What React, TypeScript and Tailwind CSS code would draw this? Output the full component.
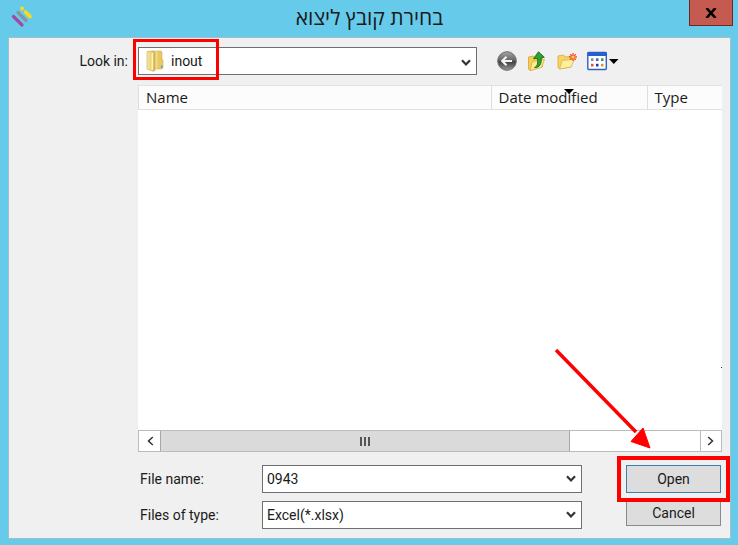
import React, { useState } from "react";

const columns = [
  { name: "Name", width: "w-auto" },
  { name: "Date modified", width: "w-[156px]", sorted: true },
  { name: "Type", width: "w-[75px]" },
];

const uiFont = "font-['Roboto','Liberation_Sans',sans-serif]";
const listFont = "font-['Open_Sans','Noto_Sans',sans-serif]";

const Chevron = ({ className = "", weight = 2.2 }: { className?: string; weight?: number }) => (
  <svg viewBox="0 0 10 8" className={`pointer-events-none h-2 w-2.5 ${className}`}>
    <path d="M1 1.2l4 4.300 4-4.300" fill="none" stroke="#333" strokeWidth={weight} />
  </svg>
);

const Logo = () => (
  <svg viewBox="0 0 24 24" className="size-6" strokeLinecap="round" strokeWidth="3.2">
    <path d="M3.500 12.500l8.500 8.500" stroke="#a349a4" />
    <path d="M8 8.500l8 8" stroke="#8296a8" />
    <path d="M15.500 8l4.500 4.500" stroke="#ffd91a" strokeWidth="3.800" />
    <circle cx="12" cy="4.500" r="2" fill="#ffd91a" />
  </svg>
);

const FolderIcon = () => (
  <svg viewBox="0 0 18 22" className="pointer-events-none absolute top-[3px] left-2 h-[22px] w-[18px]">
    <defs>
      <linearGradient id="flap" x1="0" x2="1">
        <stop offset="0" stopColor="#f9eaa8" />
        <stop offset="1" stopColor="#d9b74c" />
      </linearGradient>
    </defs>
    <path d="M6 1h9l1 1v7l1 1v8l-1 1H7z" fill="#e6c864" stroke="#d3b350" strokeWidth=".6" />
    <path d="M9 1.500h2.500v17H9z" fill="#f1db8a" />
    <path d="M1 1.500L6.500 1l2.500 1.500v18l-2 .8L1 19z" fill="url(#flap)" stroke="#cdab48" strokeWidth=".6" />
    <path d="M5.500 3.500l1.500-1v17l-1.500 1z" fill="#fff3c4" />
    <path d="M15 15.500h1.500V18H15z" fill="#4f9fd8" />
  </svg>
);

const BackIcon = () => (
  <svg viewBox="0 0 20 20" className="size-5">
    <defs>
      <linearGradient id="disc" x1="0" x2="0" y1="0" y2="1">
        <stop offset="0" stopColor="#a5a5a5" />
        <stop offset=".45" stopColor="#686868" />
        <stop offset=".55" stopColor="#404040" />
        <stop offset="1" stopColor="#9a9a9a" />
      </linearGradient>
    </defs>
    <circle cx="10" cy="10" r="9.300" fill="url(#disc)" stroke="#6b6b6b" />
    <path d="M15 10H5.500M9.500 5.700L5.200 10l4.300 4.300" fill="none" stroke="#f4f4f4" strokeWidth="2.200" />
  </svg>
);

const UpIcon = () => (
  <svg viewBox="0 0 20 20" className="size-5">
    <path d="M1.500 6l5-1L8 6.500l7.500-1v10L3 19.500 1.500 18z" fill="#f5cf55" stroke="#d5a52c" strokeWidth=".8" />
    <path d="M5.500 10.500l12-2-3 8L3 19.500z" fill="#ffe995" stroke="#d9ac38" strokeWidth=".8" />
    <path
      d="M7.500 16.500c3-1 3.500-4.500 3-9L6.500 7.700 11.500.8l5.800 5.400-3.300.7c1 5.600-1.500 10.100-6.500 9.600z"
      fill="#30a32e"
      stroke="#11731a"
      strokeWidth=".9"
    />
  </svg>
);

const NewFolderIcon = () => (
  <svg viewBox="0 0 20 20" className="size-5">
    <path d="M1 5l5.500-1L8 6l6-.8V16L2.500 18 1 16.500z" fill="#f7d565" stroke="#d8aa35" strokeWidth=".8" />
    <path d="M5 9.500L17.500 8 14 16 2.500 18z" fill="#ffeda2" stroke="#dcb144" strokeWidth=".8" />
    <path d="M16 2v8M12 6h8M13.200 3.200l5.600 5.600M18.800 3.200l-5.600 5.600" stroke="#f2552c" strokeWidth="1.400" />
    <circle cx="16" cy="6" r="1.600" fill="#ffd45e" />
  </svg>
);

const ViewIcon = () => (
  <svg viewBox="0 0 32 20" className="h-5 w-8">
    <rect x=".8" y="1.500" width="18.500" height="17" rx="1" fill="#fff" stroke="#2c62c4" strokeWidth="1.400" />
    <path d="M.5 1h19v4H.5z" fill="#2560ce" />
    <path d="M4 7.300h2.500V10H4z" fill="#8a83b5" />
    <path d="M9 7.300h2.500V10H9z" fill="#3d62c8" />
    <path d="M14 7.300h2.500V10H14z" fill="#3a9946" />
    <path d="M4 12.800h2.500v2.700H4z" fill="#e05536" />
    <path d="M9 12.800h2.500v2.700H9z" fill="#203b9b" />
    <path d="M14 12.800h2.500v2.700H14z" fill="#d29a2a" />
    <path d="M22 8h9.500l-4.700 5z" fill="#000" />
  </svg>
);

const tools = [
  { label: "Back", icon: <BackIcon /> },
  { label: "Up one level", icon: <UpIcon /> },
  { label: "Create new folder", icon: <NewFolderIcon /> },
  { label: "View menu", icon: <ViewIcon /> },
];

const App: React.FC = () => {
  const [fileName, setFileName] = useState<string>("0943");

  return (
    <div className={`flex min-h-screen flex-col bg-[#66cbea] pr-[7px] pb-1.5 pl-2 text-sm text-[#1a1a1a] ${uiFont}`}>
      {/* Title bar */}
      <header className="relative flex h-[37px] items-center justify-center">
        <div className="absolute top-1 left-0.5">
          <Logo />
        </div>
        <h1 dir="rtl" className="pb-1 text-[21px] leading-8 font-['Open_Sans','Noto_Sans',sans-serif]">
          בחירת קובץ ליצוא
        </h1>
        <button
          aria-label="Close"
          className="absolute top-0 -right-0.5 flex h-[26px] w-11 items-center justify-center border border-t-0 border-[#6d2a22] bg-[#c55a50]"
        >
          <svg viewBox="0 0 12 10" className="h-2.5 w-3">
            <path d="M1.500 0l9 10M10.500 0l-9 10" stroke="#000" strokeWidth="2.600" />
          </svg>
        </button>
      </header>

      <main className="flex flex-1 flex-col border border-[#a3bfca] bg-[#f0f0f0] pt-[9px] pr-2 pb-[9px]">
        <div className="flex items-center">
          <label htmlFor="look-in" className="w-[129px] shrink-0 pr-2.5 text-right">
            Look in:
          </label>
          <div className="relative max-w-[339px] flex-1">
            <select
              id="look-in"
              className="block h-7 w-full appearance-none border border-[#6f6f6f] bg-white pl-8"
            >
              <option>inout</option>
            </select>
            <FolderIcon />
            <Chevron className="absolute top-3 right-1.5" />
            <div className="pointer-events-none absolute -top-2 -left-[5px] h-[41px] w-[86px] border-3 border-[#fe0000]" />
          </div>
          <div className="ml-5 flex items-center gap-2.5">
            {tools.map((tool) => (
              <button key={tool.label} aria-label={tool.label}>
                {tool.icon}
              </button>
            ))}
          </div>
        </div>

        {/* File list */}
        <div className="relative mt-2.5 ml-[129px] flex flex-1 flex-col bg-white">
          <table className={`w-full table-fixed text-[15px] ${listFont}`}>
            <thead>
              <tr className="h-6 border-y border-[#e2e2e2] bg-[#fcfcfc]">
                {columns.map((col) => (
                  <th
                    key={col.name}
                    className={`relative border-l border-[#dedede] pt-0 pb-0.5 pl-[7px] text-left leading-5 font-normal ${col.width}`}
                  >
                    {col.name}
                    {col.sorted && (
                      <svg viewBox="0 0 10 5" className="absolute top-[3px] left-[72px] h-[5px] w-2.5">
                        <path d="M0 0h10L5 5z" />
                      </svg>
                    )}
                  </th>
                ))}
              </tr>
            </thead>
          </table>

          <div className="mt-auto flex h-[22px] border border-[#bcbcbc]">
            <button aria-label="Scroll left" className="flex w-[21px] items-center justify-center">
              <Chevron className="rotate-90" weight={1.5} />
            </button>
            <div className="flex-1">
              <div className="flex h-full w-[76%] items-center justify-center gap-0.5 border-x border-[#a6a6a6] bg-[#dadada]">
                <span className="h-[9px] w-0.5 bg-[#555]" />
                <span className="h-[9px] w-0.5 bg-[#555]" />
                <span className="h-[9px] w-0.5 bg-[#555]" />
              </div>
            </div>
            <button
              aria-label="Scroll right"
              className="flex w-[21px] items-center justify-center border-l border-[#bcbcbc]"
            >
              <Chevron className="-rotate-90" weight={1.5} />
            </button>
          </div>

          <span className="absolute right-0 bottom-[84px] size-px bg-[#333]" />

          {/* Arrow to the Open button */}
          <svg viewBox="0 0 98 102" className="pointer-events-none absolute right-[71px] bottom-[3px] h-[102px] w-[98px]">
            <path d="M3 3l80 82" stroke="#fe0000" strokeWidth="3.500" />
            <path d="M97 101L78 94.500 90 81z" fill="#fe0000" stroke="#fe0000" />
          </svg>
        </div>

        <div className="mt-[13px] ml-[131px] flex pr-px">
          <div className="grid flex-1 grid-cols-[122px_1fr] items-center gap-y-2">
            <label htmlFor="file-name">File name:</label>
            <div className="relative">
              <input
                id="file-name"
                type="text"
                value={fileName}
                onChange={(e) => setFileName(e.target.value)}
                className="block h-7 w-full border border-[#6f6f6f] bg-white pl-1"
              />
              <Chevron className="absolute top-2.5 right-1.5" />
            </div>
            <label htmlFor="file-type">Files of type:</label>
            <div className="relative">
              <select
                id="file-type"
                className="block h-7 w-full appearance-none border border-[#6f6f6f] bg-white pl-1"
              >
                <option>Excel(*.xlsx)</option>
              </select>
              <Chevron className="absolute top-2.5 right-1.5" />
            </div>
          </div>

          <div className="relative ml-11 flex w-[95px] flex-col gap-[7px]">
            <button className="h-7 border border-[#3c7fb1] bg-[#dddddd]">Open</button>
            <button className="h-[26px] border border-[#8a8a8a] bg-[#dddddd]">Cancel</button>
            <div className="pointer-events-none absolute -top-[9px] -left-[9px] h-[46px] w-[113px] border-4 border-[#fe0000]" />
          </div>
        </div>
      </main>
    </div>
  );
};

export default App;
